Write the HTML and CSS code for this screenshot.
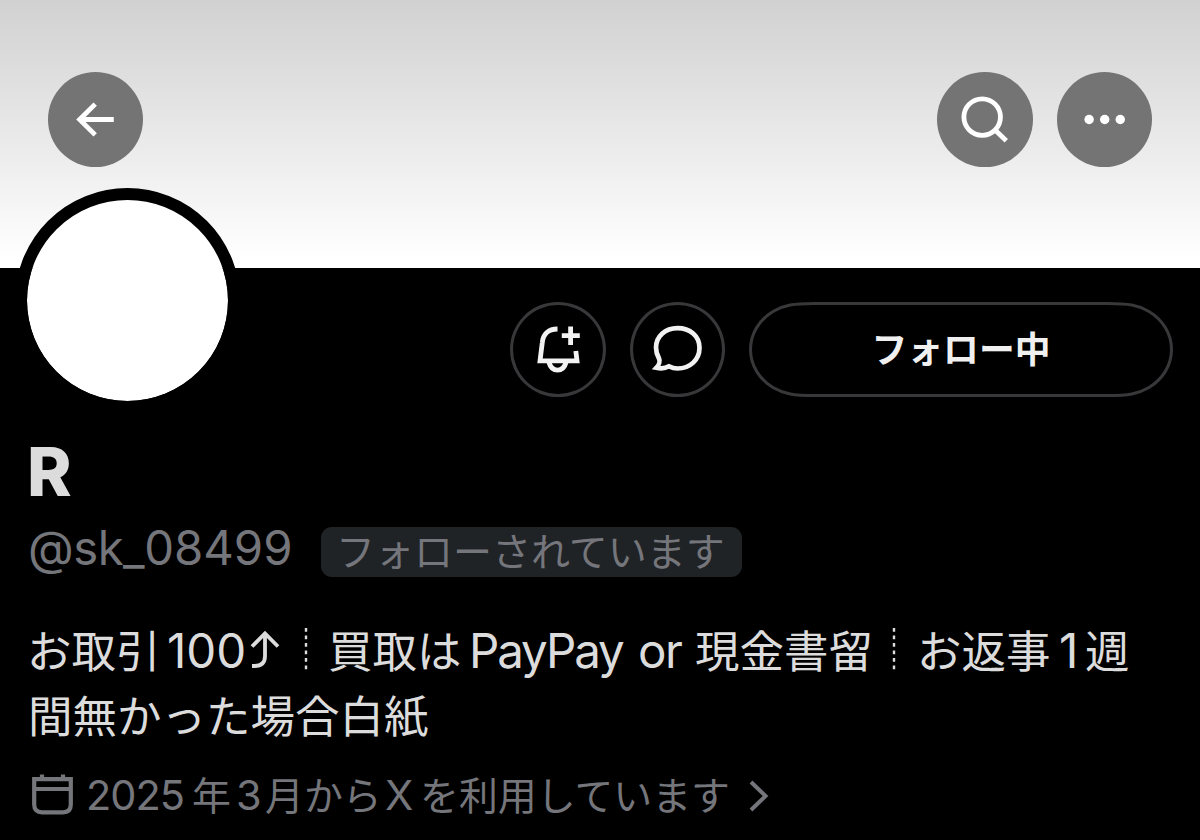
FILE: index.html
```html
<!DOCTYPE html>
<html lang="ja">
<head>
<meta charset="utf-8">
<title>R (@sk_08499)</title>
<link rel="stylesheet" href="styles.css">
</head>
<body>
<main class="profile">
  <header class="banner">
    <button class="nav-button" aria-label="戻る">
      <svg viewBox="0 0 95 95"><path d="M65.500 47.300H31.500M47 32 31.500 47.300 47 62.600" stroke-width="4.800"/></svg>
    </button>
    <div class="nav-group">
      <button class="nav-button" aria-label="検索">
        <svg viewBox="0 0 95 95"><circle cx="45" cy="44.900" r="18.200" stroke-width="4.800"/><path d="M57.600 57.500 69 68.500" stroke-width="4.800"/></svg>
      </button>
      <button class="nav-button" aria-label="その他">
        <svg viewBox="0 0 95 95"><g class="solid"><circle cx="32" cy="47.300" r="4.700"/><circle cx="47.500" cy="47.300" r="4.700"/><circle cx="63" cy="47.300" r="4.700"/></g></svg>
      </button>
    </div>
  </header>
  <div class="avatar"></div>

  <div class="actions">
    <button class="round-button" aria-label="通知">
      <svg viewBox="0 0 95 95"><path d="M47.500 27C38 27 33 32.500 32.300 40.500L30 58.800h37L65.800 49M60.600 24.500v18.500M51.800 33.700h18M39 60.500c1.500 5.500 4.500 7.600 8.500 7.600s7-2.100 8.500-7.600" stroke-width="4.800"/></svg>
    </button>
    <button class="round-button" aria-label="メッセージ">
      <svg viewBox="0 0 95 95"><path d="M47.500 26.100C35 26.100 26 34.500 26 45.500c0 4.200 1.200 7.700 3 11 1.200 2.300.2 6.200-2.700 9.300 4.700 1 9.100.6 12.700-1.500 2.600 1.300 5.500 2.200 8.500 2.200 12.600 0 22-8.800 22-20.700S60 26.100 47.500 26.100Z" stroke-width="4.700"/></svg>
    </button>
    <button class="follow-button">
      <svg class="follow-outline" viewBox="0 0 424 95"><path d="M65 1.500H359C379 1.500 389 3 400 9.500C414 18 422.500 32 422.500 47.500S414 77 400 85.500C389 92 379 93.500 359 93.500H65C45 93.500 35 92 24 85.500C10 77 1.500 63 1.500 47.500S10 18 24 9.500C35 3 45 1.500 65 1.500Z"/></svg>
      <span class="follow-label">フォロー中</span>
    </button>
  </div>

  <h1 class="name">R</h1>
  <div class="identity">
    <span class="handle"><span class="tight">@sk_</span>08499</span>
    <span class="badge">フォローされています</span>
  </div>

  <div class="bio">
    <div class="bio-line bio-first">
      <span>お取引</span><span class="latin">100</span>
      <svg class="curve-arrow" viewBox="0 0 32 44" role="img" aria-label="⤴"><path d="M3 38h2.500c7.500 0 10.500-3.500 10.500-10V5.500M3 18.500 16 5.500 29 18.500"/></svg>
      <svg class="dashes" viewBox="0 0 4 44" role="img" aria-label="┊"><path d="M2 1V43.500"/></svg>
      <span>買取は</span><span class="latin paypay">PayPay</span><span class="latin or">or</span><span>現金書留</span>
      <svg class="dashes" viewBox="0 0 4 44" role="img" aria-label="┊"><path d="M2 1V43.500"/></svg>
      <span>お返事</span><span class="latin">1</span><span>週</span>
    </div>
    <div class="bio-line">間無かった場合白紙</div>
  </div>

  <div class="joined">
    <svg class="calendar" viewBox="0 0 42 42"><path d="M2.200 5.200H38.800V30.500Q38.800 38.300 31 38.300H10Q2.200 38.300 2.200 30.500ZM2.200 15H38.800M10 .5V7M31 .5V7"/></svg>
    <span class="latin year">2025</span><span>年</span><span class="latin">3</span><span>月から</span><span class="latin">X</span><span>を利用しています</span>
    <svg class="chevron" viewBox="0 0 22 34"><path d="M3 3 17.500 17 3 31"/></svg>
  </div>
</main>
</body>
</html>
```
FILE: styles.css
```css
* { box-sizing: border-box; }

body {
  margin: 0;
  background: #000;
  font-family: "Noto Sans CJK JP", sans-serif;
}

button {
  padding: 0;
  border: 0;
  background: none;
  font: inherit;
}

svg {
  display: block;
  fill: none;
  stroke: currentColor;
}

.profile {
  position: relative;
  width: 1200px;
  height: 840px;
  overflow: hidden;
  color: #dcdcdc;
}

.banner {
  display: flex;
  justify-content: space-between;
  height: 268px;
  padding: 71.5px 48px 0;
  background: linear-gradient(#d1d1d1, #fff 97%);
}

.nav-group { display: flex; gap: 24px; }

.nav-button {
  width: 95.4px;
  height: 95.4px;
  border-radius: 50%;
  background: #747474;
  color: #fff;
}

.solid { fill: #fff; stroke: none; }

.avatar {
  position: absolute;
  left: 15px;
  top: 188px;
  width: 225px;
  height: 225px;
  border: 12px solid #000;
  border-radius: 50%;
  background: #fff;
  background-clip: padding-box;
}

.actions {
  display: flex;
  justify-content: flex-end;
  gap: 24px;
  padding: 34px 27px 0 0;
}

.round-button {
  width: 95.4px;
  height: 95px;
  border: 3px solid #38383a;
  border-radius: 50%;
  color: #f2f2f2;
}

.round-button svg { width: 95px; height: 95px; margin: -3px; }

.follow-button {
  display: grid;
  place-items: center;
  width: 424px;
  height: 95px;
  color: #f0f0f0;
  font-size: 35.8px;
  font-weight: 700;
  line-height: 50px;
}

.follow-button > * { grid-area: 1 / 1; }

.follow-label { padding-bottom: 5px; }

.follow-outline {
  width: 424px;
  height: 95px;
  stroke: #38383a;
  stroke-width: 3;
}

.name {
  margin: 35px 0 0 27px;
  font: 800 67.5px/80px Inter, sans-serif;
}

.identity {
  display: flex;
  align-items: flex-start;
  height: 50px;
  margin-top: 15px;
  color: #75767b;
}

.handle {
  width: 293px;
  margin-left: 28px;
  font: 400 47.3px/42px Inter, sans-serif;
  white-space: nowrap;
}

.tight { letter-spacing: -.5px; }

.badge {
  width: 421px;
  height: 50px;
  padding-left: 15px;
  border-radius: 11px;
  background: #202326;
  font-size: 39px;
  line-height: 45px;
  white-space: nowrap;
}

.bio {
  margin: 39px 0 0 28px;
  font-size: 44.5px;
  line-height: 65px;
}

.bio-line { height: 65px; white-space: nowrap; }

.bio-first {
  display: grid;
  grid-template-columns: 139px 82px 55px 24px 141px 169px 57px 197px 25px 142px 26px 50px;
  align-items: baseline;
}

.bio-first > :first-child { margin-left: -1px; }

.latin { font-family: Inter, sans-serif; font-size: 47.5px; line-height: 60px; }

.paypay { letter-spacing: -2.1px; }

.or { letter-spacing: -1.5px; }

.curve-arrow {
  width: 32px;
  height: 44px;
  align-self: start;
  margin-top: 12px;
  stroke-width: 3.8;
}

.dashes {
  width: 4px;
  height: 44px;
  align-self: start;
  margin-top: 11px;
  stroke-width: 2.4;
  stroke-dasharray: 3.8 3.7;
}

.joined {
  display: grid;
  grid-template-columns: 56px 105px 44px 29px 120px 35px 327px 22px;
  align-items: baseline;
  height: 60px;
  margin: 19px 0 0 31px;
  color: #75767b;
  font-size: 38.9px;
  line-height: 56px;
  white-space: nowrap;
}

.joined .latin { font-size: 41.5px; line-height: 56px; }

.joined .year { margin-left: -1px; letter-spacing: -1px; }

.calendar {
  width: 42px;
  height: 42px;
  align-self: start;
  margin: 9px 0 0 1px;
  stroke-width: 4.2;
}

.chevron {
  width: 22px;
  height: 34px;
  align-self: start;
  margin: 14px 0 0 1px;
  stroke-width: 4;
}
```
